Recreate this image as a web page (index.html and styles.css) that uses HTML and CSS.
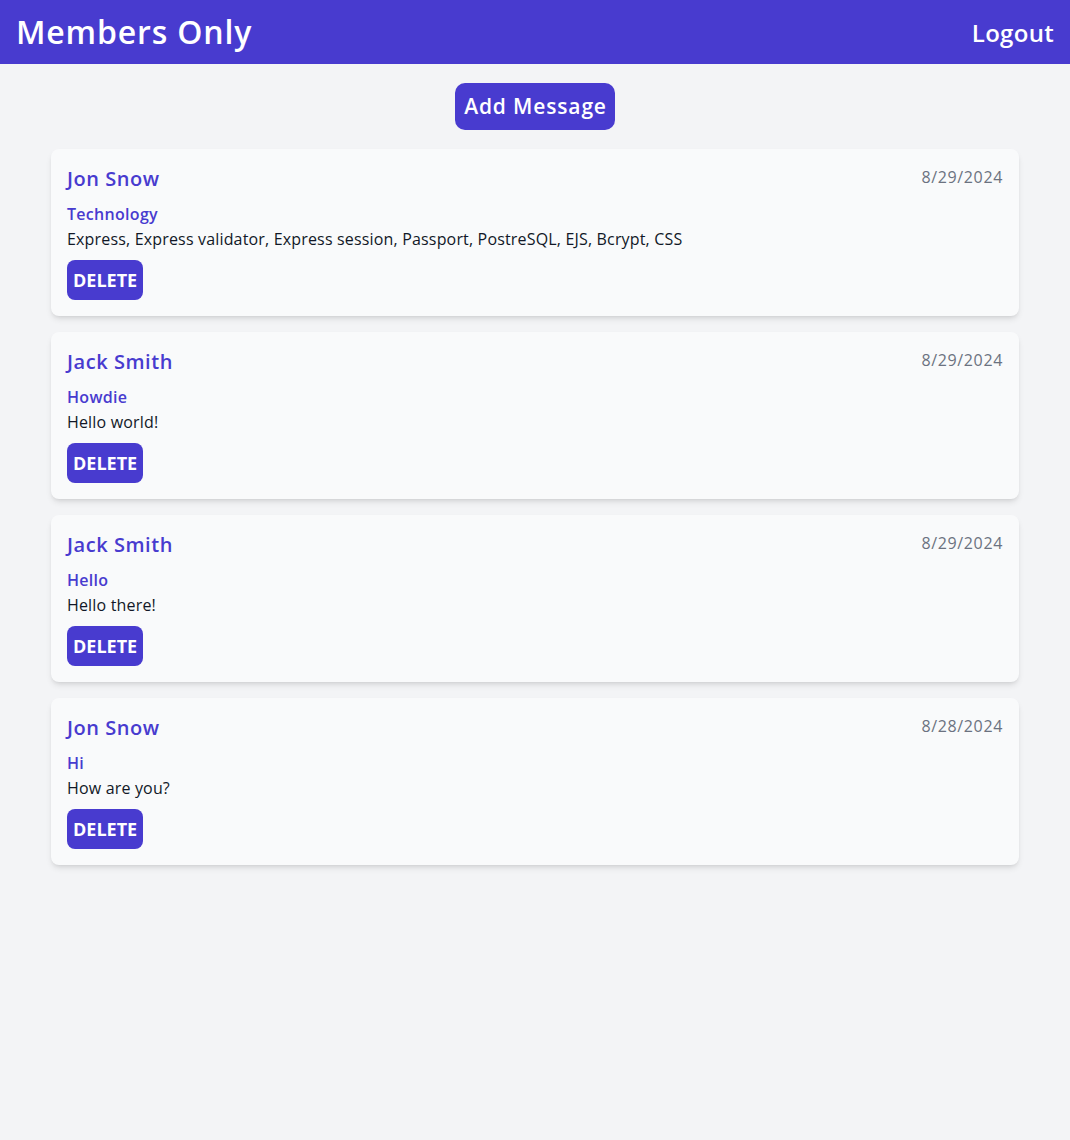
FILE: index.html
```html
<!DOCTYPE html>
<html lang="en">
<head>
<meta charset="utf-8">
<title>Members Only</title>
<link rel="stylesheet" href="styles.css">
</head>
<body>
<header class="topbar">
  <h1 class="brand">Members Only</h1>
  <a class="logout" href="#">Logout</a>
</header>
<main class="main">
  <a class="add-btn" href="#">Add Message</a>
  <section class="list">
    <article class="card">
      <div class="card-head">
        <h2 class="author">Jon Snow</h2>
        <span class="date">8/29/2024</span>
      </div>
      <h3 class="title">Technology</h3>
      <p class="body">Express, Express validator, Express session, Passport, PostreSQL, EJS, Bcrypt, CSS</p>
      <button class="del">DELETE</button>
    </article>
    <article class="card">
      <div class="card-head">
        <h2 class="author">Jack Smith</h2>
        <span class="date">8/29/2024</span>
      </div>
      <h3 class="title">Howdie</h3>
      <p class="body">Hello world!</p>
      <button class="del">DELETE</button>
    </article>
    <article class="card">
      <div class="card-head">
        <h2 class="author">Jack Smith</h2>
        <span class="date">8/29/2024</span>
      </div>
      <h3 class="title">Hello</h3>
      <p class="body">Hello there!</p>
      <button class="del">DELETE</button>
    </article>
    <article class="card">
      <div class="card-head">
        <h2 class="author">Jon Snow</h2>
        <span class="date">8/28/2024</span>
      </div>
      <h3 class="title">Hi</h3>
      <p class="body">How are you?</p>
      <button class="del">DELETE</button>
    </article>
  </section>
</main>
</body>
</html>
```
FILE: styles.css
```css
* { box-sizing: border-box; }
html, body { margin: 0; padding: 0; }
body {
  background: #f3f4f6;
  font-family: "Open Sans", "Noto Sans", sans-serif;
  color: #111827;
  min-height: 1140px;
}
.topbar {
  height: 64px;
  background: #483bcf;
  display: flex;
  align-items: center;
  justify-content: space-between;
  padding: 0 16px;
}
.brand {
  margin: 0;
  color: #fff;
  font-size: 32px;
  font-weight: 600;
  line-height: 40px;
  letter-spacing: 0.85px;
}
.logout {
  color: #fff;
  text-decoration: none;
  font-size: 24px;
  font-weight: 600;
  letter-spacing: 0.3px;
  margin-right: 0;
}
.main {
  display: flex;
  flex-direction: column;
  align-items: center;
  padding-top: 19px;
}
.add-btn {
  background: #483bcf;
  color: #fff;
  text-decoration: none;
  font-size: 21px;
  font-weight: 600;
  letter-spacing: 0.85px;
  height: 47px;
  line-height: 47px;
  padding: 0 8px 0 9px;
  border-radius: 10px;
  margin-bottom: 19px;
}
.list {
  width: 968px;
  display: flex;
  flex-direction: column;
  gap: 16px;
}
.card {
  background: #f9fafb;
  border-radius: 8px;
  box-shadow: 0 4px 6px -1px rgba(0,0,0,0.1), 0 2px 4px -2px rgba(0,0,0,0.1);
  padding: 16px;
  display: flex;
  flex-direction: column;
  align-items: flex-start;
}
.card-head {
  width: 100%;
  display: flex;
  justify-content: space-between;
  align-items: flex-start;
}
.author {
  margin: 0;
  font-size: 20px;
  line-height: 28px;
  font-weight: 600;
  letter-spacing: 0.55px;
  color: #483bcf;
}
.date {
  font-size: 16px;
  line-height: 24px;
  letter-spacing: 0.65px;
  color: #6b7280;
}
.title {
  margin: 9px 0 0;
  font-size: 16px;
  line-height: 24px;
  font-weight: 600;
  letter-spacing: 0.3px;
  color: #483bcf;
}
.body {
  margin: 1px 0 0;
  font-size: 16px;
  line-height: 24px;
  letter-spacing: 0.17px;
  color: #111827;
}
.del {
  margin-top: 9px;
  height: 40px;
  padding: 0 6px;
  border: none;
  border-radius: 8px;
  background: #483bcf;
  color: #fff;
  font-family: "Open Sans", sans-serif;
  font-size: 18px;
  font-weight: 700;
  cursor: pointer;
}
```
